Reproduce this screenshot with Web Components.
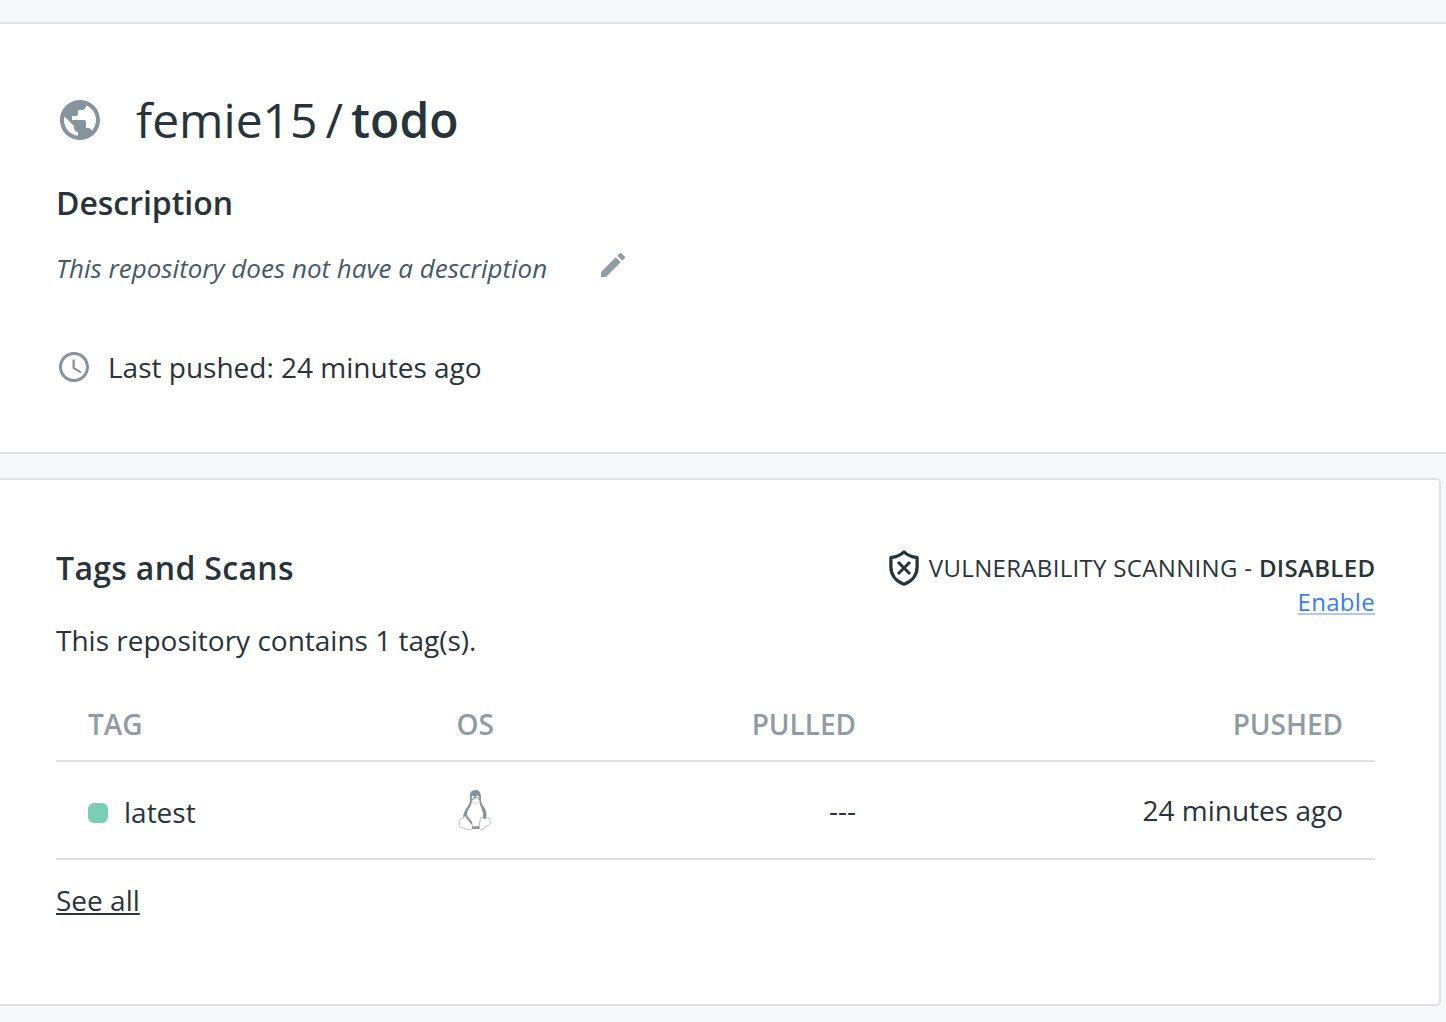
<!DOCTYPE html>
<html lang="en"><head><meta charset="utf-8"><title>femie15/todo</title>
<style>body{margin:0;background:#f7f8fa;font-family:"Open Sans","Noto Sans",sans-serif;color:#27343b}</style></head>
<body>
<repo-page></repo-page>
<script>
const define = (name, html) => customElements.define(name, class extends HTMLElement {
  constructor() {
    super();
    const t = document.createElement('template');
    t.innerHTML = html;
    this.attachShadow({ mode: 'open' }).append(t.content.cloneNode(true));
  }
});

define('icon-globe', `<style>:host{display:block;width:48px;height:48px;color:#85939c}svg{display:block}</style>
<svg width="48" height="48" viewBox="0 0 24 24" fill="currentColor"><path d="M12 2C6.48 2 2 6.48 2 12s4.48 10 10 10 10-4.48 10-10S17.52 2 12 2zm-1 17.93c-3.95-.49-7-3.85-7-7.93 0-.62.08-1.21.21-1.79L9 15v1c0 1.100.9 2 2 2v1.930zm6.900-2.540c-.26-.81-1-1.390-1.900-1.390h-1v-3c0-.55-.45-1-1-1H8v-2h2c.55 0 1-.45 1-1V7h2c1.100 0 2-.9 2-2v-.41c2.930 1.190 5 4.060 5 7.410 0 2.080-.8 3.970-2.100 5.390z"/></svg>`);

define('icon-pencil', `<style>:host{display:block;width:32px;height:32px;color:#919da5}svg{display:block}</style>
<svg width="32" height="32" viewBox="0 0 24 24" fill="currentColor"><path d="M3 17.250V21h3.750L17.810 9.940l-3.750-3.750L3 17.250zM20.710 7.040c.39-.39.39-1.020 0-1.410l-2.340-2.340c-.39-.39-1.020-.39-1.410 0l-1.830 1.830 3.750 3.750 1.830-1.830z"/></svg>`);

define('icon-clock', `<style>:host{display:block;width:36px;height:36px;color:#85939c}svg{display:block}</style>
<svg width="36" height="36" viewBox="0 0 24 24" fill="currentColor"><path d="M11.990 2C6.470 2 2 6.480 2 12s4.470 10 9.990 10C17.520 22 22 17.520 22 12S17.520 2 11.990 2zM12 20c-4.420 0-8-3.580-8-8s3.580-8 8-8 8 3.580 8 8-3.580 8-8 8z"/><path d="M12.500 7H11v6l5.250 3.150.75-1.230-4.500-2.670z"/></svg>`);

define('icon-shield', `<style>:host{display:block;width:32px;height:38px;color:#27343b}svg{display:block}</style>
<svg width="32" height="38" viewBox="0 0 32 38" fill="none" stroke="currentColor" stroke-width="3.300" stroke-linejoin="round"><path d="M16 2.900C13.200 5.700 8.500 7.900 2.900 8.700V18c0 8 5 14.300 13.100 17.200C24.100 32.300 29.100 26 29.100 18V8.700C23.500 7.900 18.800 5.700 16 2.900z"/><path d="M10 13l12 12M22 13L10 25" stroke-width="3"/></svg>`);

define('icon-linux', `<style>:host{display:block;width:34px;height:42px;color:#85939c}svg{display:block}</style>
<svg width="34" height="42" viewBox="0 0 34 42"><path fill="currentColor" d="M17.500 1c-4 0-6 2.800-5.700 6.700.3 4.800.4 6.300-2.500 10.200C6.800 21.300 4.800 25 5.300 29l8 11h9l6-12c1-4-.8-8-3.300-11.200-2-2.700-2-5-2-8.600C23 3.700 21.300 1 17.500 1z"/>
<path fill="#fff" d="M13.800 12.700l3.800 1.900 3.700-2.400c.5 4.400 2.700 7.600 3.600 11.800.4 2.200.2 4 0 5.500l-2.600 1-1 6.900-7.800.8L10 28.500c-1.800-2.500-.8-5.900.7-8.300 1.500-2.400 2.800-4.500 3.100-7.500z"/>
<ellipse cx="15" cy="8.300" rx="1.300" ry="1.600" fill="#fff"/><ellipse cx="19.400" cy="8.300" rx="1.600" ry="1.900" fill="#fff"/><circle cx="15.400" cy="8.600" r=".7" fill="currentColor"/><circle cx="19" cy="8.600" r=".8" fill="currentColor"/>
<path fill="#fff" stroke="currentColor" stroke-width=".25" d="M14 11.400c1.200-.6 2.300-1.900 3.600-1.900 1.300 0 2.300 1 3.700 1.500.8.300.4 1.500-.4 1.900-1.300.7-2.100 1.900-3.500 1.700-1.400-.2-2.200-1.500-3.300-2.100-.5-.3-.7-.8-.1-1.100z"/>
<path fill="#fff" stroke="currentColor" stroke-width=".6" d="M2 30.600c1.300-1 3.100-.6 3.900-2.700.5-1.300 2.500-1.100 3.300.1 1.800 2.600 3.100 5.300 4.700 7.400 1.900 2.800.6 5.200-2.800 5.400-3.300-1-6.200-2-9.100-2.700-1.700-.5-.7-2.600-.8-4.300-.1-1.200-.4-2.300.8-3.200zM22.300 30c.2-1.900 1.400-2.400 2.300-1.600 1.800 1.800 4 1.600 5.100-.4 1.400.2 1.200 2 1.800 3.100.7 1.300 2 2.200 1.300 3.200-1.700 2.300-4.700 2.900-6.500 5-1.600 1.900-4.800 1.800-5.200-.5-.3-2.800 1-5.700 1.200-8.800z"/>
<path fill="currentColor" d="M14 37c2.600.8 5 .8 7.300-.2l-.2 2.200h-6.900zM7.500 28l1.500-1.500 5.500 7-1 2z"/></svg>`);

define('repo-header', `<style>
:host{display:block;box-sizing:border-box;height:432px;background:#fff;border:solid #dfe1e5;border-width:2px 0;padding:64px 56px 0}
h1,h2,p{margin:0}
.title{display:flex;align-items:center;gap:32px;height:64px}
h1{font-size:48px;line-height:64px;font-weight:400;white-space:nowrap;display:flex}
b{font-weight:600}.slash{margin:0 8px}
h2{margin-top:29px;font-size:32px;line-height:44px;font-weight:600;letter-spacing:-.05px}
.desc{display:flex;margin-top:23px;gap:50px;height:40px;font-size:26px;line-height:40px;font-style:italic;color:#455a68}
icon-pencil{margin-top:1px}
.pushed{display:flex;align-items:center;gap:16px;margin-top:59px;height:40px;font-size:28px;line-height:40px}
</style>
<div class="title"><icon-globe></icon-globe><h1><span>femie15</span><span class="slash">/</span><b>todo</b></h1></div>
<h2>Description</h2>
<div class="desc"><span>This repository does not have a description</span><icon-pencil></icon-pencil></div>
<div class="pushed"><icon-clock></icon-clock><span>Last pushed: 24 minutes ago</span></div>`);

define('scan-status', `<style>
:host{display:block;text-align:right;font-size:24px;line-height:34px;letter-spacing:.3px}
.line{display:flex;align-items:center;justify-content:flex-end;gap:9px;height:34px;margin-right:-.3px;letter-spacing:.32px}
b{font-weight:600}a{color:#377df7;text-decoration:underline 2px #adc9fb;text-underline-offset:2px;text-decoration-skip-ink:none}
</style><div class="line"><icon-shield></icon-shield><span>VULNERABILITY SCANNING - <b>DISABLED</b></span></div><a>Enable</a>`);

define('tag-table', `<style>
:host{display:block;margin-top:44px;font-size:28px;line-height:40px}
.row{display:grid;grid-template-columns:368.500px 200px 199.500px 1fr;box-sizing:border-box;padding:0 32px;border-bottom:2px solid #dfe0e2}
.head{height:58px;color:#8f9ca5;font-weight:600;letter-spacing:-.05px}
.body{height:98px;padding-top:28px}
.r{text-align:right}
.name{display:flex;align-items:center;gap:16px;height:46px}
.name span{margin-top:-2px}
icon-linux{margin:-1px 0 0 1px}
i{width:20px;height:20px;border-radius:6px;background:#79ceb3}
</style><div class="row head"><span>TAG</span><span>OS</span><span class="r">PULLED</span><span class="r">PUSHED</span></div>
<div class="row body"><span class="name"><i></i><span>latest</span></span><icon-linux></icon-linux><span class="r">---</span><span class="r">24 minutes ago</span></div>`);

define('tags-card', `<style>
:host{display:block;box-sizing:border-box;width:1441px;height:528px;margin-top:24px;background:#fff;border:2px solid #dfe1e5;border-left:0;border-radius:0 5px 5px 0;padding:66px 64px 0 56px}
h2,p{margin:0}h2{font-size:32px;line-height:44px;font-weight:600;letter-spacing:.32px}
.top{display:flex;justify-content:space-between;height:74px}
scan-status{margin-top:5px}
p,a{font-size:28px;line-height:40px}
a{display:inline-block;margin-top:20px;text-decoration:underline}
</style><div class="top"><h2>Tags and Scans</h2><scan-status></scan-status></div>
<p>This repository contains 1 tag(s).</p><tag-table></tag-table><a>See all</a>`);

define('repo-page', `<style>:host{display:flow-root;padding-top:22px;height:1000px;overflow:hidden}</style><repo-header></repo-header><tags-card></tags-card>`);
</script></body></html>
